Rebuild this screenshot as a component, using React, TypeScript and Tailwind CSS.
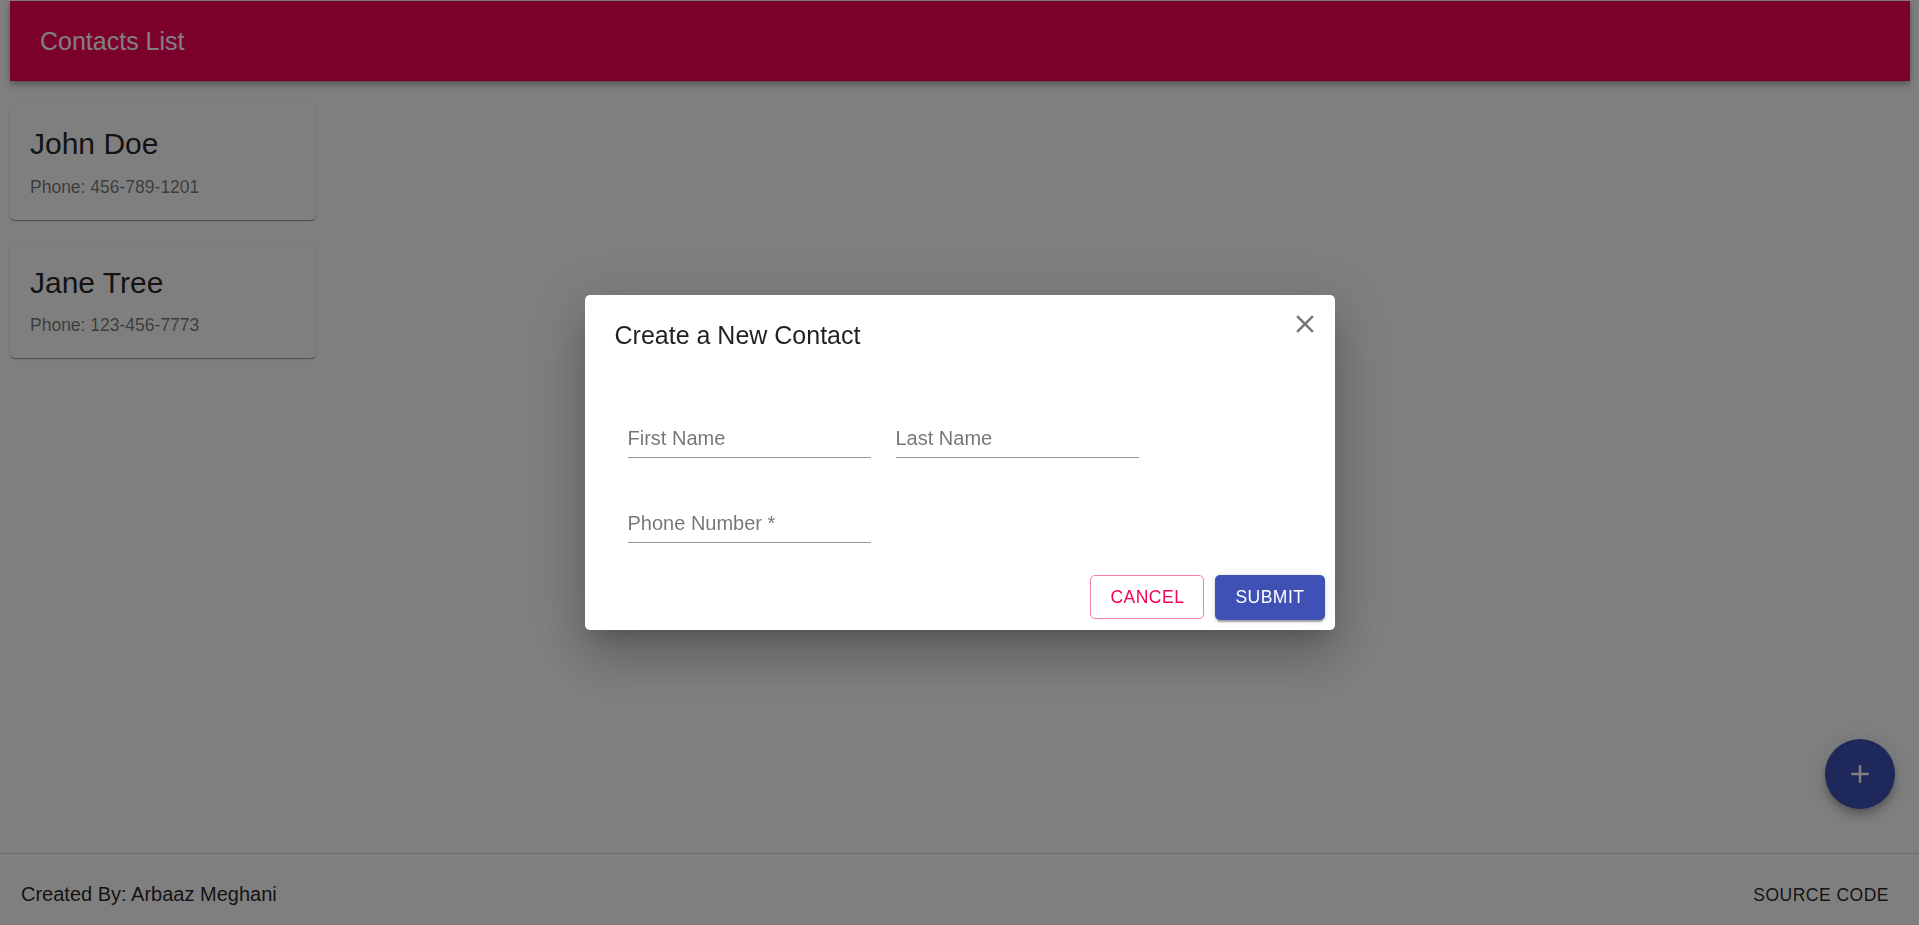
import React from "react";

const font = "font-['Liberation_Sans',Arial,Helvetica,sans-serif]";

function ContactCard({ name, phone }: { name: string; phone: string }) {
  return (
    <div className="w-[306px] bg-white rounded-[5px] px-[20px] pt-[20px] pb-[20px] shadow-[0px_2px_1px_-1px_rgba(0,0,0,0.2),0px_1px_1px_0px_rgba(0,0,0,0.14),0px_1px_3px_0px_rgba(0,0,0,0.12)]">
      <div className="text-[30px] leading-[40px] text-[rgba(0,0,0,0.87)] mb-[10.5px]">{name}</div>
      <div className="text-[17.5px] leading-[25px] text-[rgba(0,0,0,0.54)]">Phone: {phone}</div>
    </div>
  );
}

function Field({ label }: { label: string }) {
  return (
    <div className="w-[243px] border-b border-[rgba(0,0,0,0.42)] pb-[7px]">
      <div className="text-[20px] leading-[24px] text-[rgba(0,0,0,0.54)]">{label}</div>
    </div>
  );
}

export default function App() {
  return (
    <div className={`${font} min-h-screen bg-white flex flex-col`}>
      <main className="flex-1 pl-[10px] pr-[9px] pt-[1px]">
        <header className="h-[80px] bg-[#f90059] flex items-center px-[30px] shadow-[0px_2px_5px_-1px_rgba(0,0,0,0.2),0px_5px_6px_0px_rgba(0,0,0,0.14),0px_1px_12px_0px_rgba(0,0,0,0.12)]">
          <h1 className="text-[25px] leading-[40px] text-white font-normal">Contacts List</h1>
        </header>
        <div className="flex flex-col gap-[23px] pt-[23px]">
          <ContactCard name="John Doe" phone="456-789-1201" />
          <ContactCard name="Jane Tree" phone="123-456-7773" />
        </div>
      </main>

      <footer className="h-[72px] border-t border-[#d6d6d6] pt-[28px] pl-[21px] pr-[20px] flex items-baseline justify-between">
        <span className="text-[20px] leading-[24px] text-[rgba(0,0,0,0.87)]">Created By: Arbaaz Meghani</span>
        <button className="px-[10px] text-[17.5px] leading-[24px] tracking-[0.5px] uppercase text-[rgba(0,0,0,0.87)]">
          Source Code
        </button>
      </footer>

      <button className="fixed right-[24px] top-[739px] w-[70px] h-[70px] rounded-full bg-[#3f51b5] flex items-center justify-center shadow-[0px_4px_6px_-1px_rgba(0,0,0,0.2),0px_8px_12px_0px_rgba(0,0,0,0.14),0px_1px_22px_0px_rgba(0,0,0,0.12)]">
        <svg width="30" height="30" viewBox="0 0 24 24" fill="#ffffff">
          <path d="M19 13h-6v6h-2v-6H5v-2h6V5h2v6h6v2z" />
        </svg>
      </button>

      <div className="fixed inset-0 bg-black/50 flex items-center justify-center">
        <div className="relative w-[750px] bg-white rounded-[5px] shadow-[0px_14px_19px_-9px_rgba(0,0,0,0.2),0px_30px_48px_4px_rgba(0,0,0,0.14),0px_11px_58px_10px_rgba(0,0,0,0.12)]">
          <div className="px-[30px] py-[20px]">
            <h2 className="text-[25px] leading-[40px] text-[rgba(0,0,0,0.87)] font-normal">Create a New Contact</h2>
          </div>
          <button className="absolute top-[14px] right-[15px] w-[30px] h-[30px] flex items-center justify-center">
            <svg width="30" height="30" viewBox="0 0 24 24" fill="rgba(0,0,0,0.54)">
              <path d="M19 6.41L17.59 5 12 10.59 6.41 5 5 6.41 10.59 12 5 17.59 6.41 19 12 13.41 17.59 19 19 17.59 13.41 12z" />
            </svg>
          </button>
          <div className="pl-[43px] pr-[30px]">
            <div className="flex gap-[25px] mt-[51px]">
              <Field label="First Name" />
              <Field label="Last Name" />
            </div>
            <div className="flex mt-[53px]">
              <Field label="Phone Number *" />
            </div>
          </div>
          <div className="flex justify-end gap-[11px] mt-[32px] pr-[10px] pb-[10px]">
            <button className="h-[44px] px-[19px] rounded-[5px] border border-[rgba(245,0,87,0.5)] text-[#f50057] text-[17.5px] tracking-[0.5px] uppercase">
              Cancel
            </button>
            <button className="h-[45px] px-[20px] rounded-[5px] bg-[#3f51b5] text-white text-[17.5px] tracking-[0.5px] uppercase shadow-[0px_4px_1px_-2px_rgba(0,0,0,0.2),0px_2px_2px_0px_rgba(0,0,0,0.14),0px_1px_6px_0px_rgba(0,0,0,0.12)]">
              Submit
            </button>
          </div>
        </div>
      </div>
    </div>
  );
}
